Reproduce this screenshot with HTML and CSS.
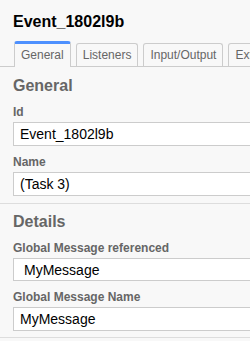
FILE: index.html
```html
<!DOCTYPE html>
<html lang="en">
<head>
    <meta charset="UTF-8">
    <meta name="viewport" content="width=device-width, initial-scale=1.0">
    <title>Properties</title>
    <link rel="stylesheet" href="styles.css">
</head>
<body>
    <div class="panel">
        <div class="header">
            <div class="title">Event_1802l9b</div>
        </div>
        <ul class="tabs">
            <li class="tab active">General</li>
            <li class="tab">Listeners</li>
            <li class="tab">Input/Output</li>
            <li class="tab">Extensions</li>
        </ul>
        <div class="group">
            <div class="group-title">General</div>
            <div class="field">
                <label for="id">Id</label>
                <input type="text" id="id" value="Event_1802l9b">
            </div>
            <div class="field">
                <label for="name">Name</label>
                <input type="text" id="name" value="(Task 3)">
            </div>
        </div>
        <div class="group">
            <div class="group-title">Details</div>
            <div class="field">
                <label for="msg-ref">Global Message referenced</label>
                <select id="msg-ref">
                    <option>MyMessage</option>
                </select>
            </div>
            <div class="field">
                <label for="msg-name">Global Message Name</label>
                <input type="text" id="msg-name" value="MyMessage">
            </div>
        </div>
    </div>
</body>
</html>
```
FILE: styles.css
```css
body {
  margin: 0;
  background-color: #f8f8f8;
  font-family: "Liberation Sans", Arial, sans-serif;
  color: #333;
  overflow: hidden;
}
.panel {
  width: 300px;
}
.header {
  padding: 12px 13px 9px;
}
.title {
  font-size: 16px;
  font-weight: bold;
  line-height: 20px;
  color: #000;
}
.tabs {
  display: flex;
  align-items: flex-end;
  gap: 5px;
  margin: 0;
  padding: 0 0 0 14px;
  list-style: none;
  border-bottom: 1px solid #ccc;
}
.tab {
  padding: 0 6px;
  font-size: 12px;
  line-height: 22px;
  color: #666;
  white-space: nowrap;
  border: 1px solid #ccc;
  border-bottom: none;
  border-radius: 3px 3px 0 0;
}
.tab.active {
  border-top: 3px solid #4d90fe;
  padding-bottom: 1px;
  margin-bottom: -1px;
  background-color: #f8f8f8;
}
.group {
  padding: 8px 13px 7px;
  border-bottom: 1px solid #ddd;
}
.group + .group {
  padding-top: 7px;
  padding-bottom: 6px;
}
.group-title {
  font-size: 16px;
  font-weight: bold;
  line-height: 21px;
  color: #666;
  margin-bottom: 8px;
}
.field {
  margin-bottom: 8px;
}
.field:last-child {
  margin-bottom: 0;
}
.field label {
  display: block;
  font-size: 12px;
  font-weight: bold;
  line-height: 16px;
  color: #666;
  margin-bottom: 2px;
}
.field input, .field select {
  display: block;
  box-sizing: border-box;
  width: 100%;
  height: 24px;
  margin: 0;
  padding: 0 6px;
  border: 1px solid #ccc;
  border-radius: 0;
  background: #fff;
  font-family: inherit;
  font-size: 14px;
  color: #000;
}
.field select {
  -webkit-appearance: none;
  appearance: none;
  height: 23px;
  padding: 0 10px;
}
```
